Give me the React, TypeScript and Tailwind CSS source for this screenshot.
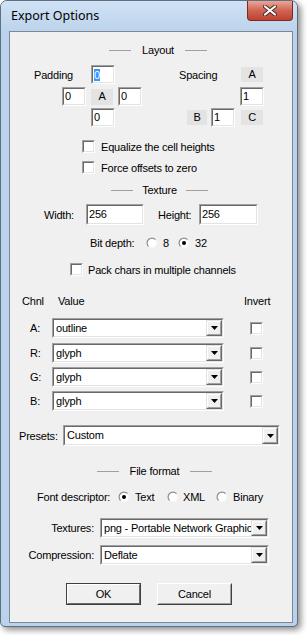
import React from 'react';

type Cls = { className?: string; children?: React.ReactNode };

function Sunken({ className = '', children, inner = '' }: Cls & { inner?: string }) {
  return (
    <div className={`shrink-0 border border-t-[#a0a0a0] border-l-[#a0a0a0] border-r-white border-b-white ${className}`}>
      <div className={`h-full border border-t-[#696969] border-l-[#696969] border-r-[#e3e3e3] border-b-[#e3e3e3] bg-white ${inner}`}>
        {children}
      </div>
    </div>
  );
}

function Edit({ className, value, selected }: { className: string; value: string; selected?: boolean }) {
  return (
    <Sunken className={className} inner="flex items-center pl-[1px]">
      {selected ? (
        <span className="bg-[#3399ff] text-white leading-[12px]">{value}</span>
      ) : (
        <span className="leading-[13px]">{value}</span>
      )}
    </Sunken>
  );
}

function Tag({ className = '', label }: { className?: string; label: string }) {
  return (
    <div className={`shrink-0 flex items-center justify-center bg-[#e3e3e3] leading-[13px] ${className}`}>
      {label}
    </div>
  );
}

function Check({ className = '' }: { className?: string }) {
  return <Sunken className={`w-[13px] h-[13px] ${className}`} />;
}

function Radio({ on = false }: { on?: boolean }) {
  return (
    <svg width="12" height="12" viewBox="0 0 12 12" className="shrink-0">
      <defs>
        <linearGradient id="rg" x1="0" y1="0" x2="1" y2="1">
          <stop offset="0.45" stopColor="#8c8c8c" />
          <stop offset="0.55" stopColor="#f4f4f4" />
        </linearGradient>
      </defs>
      <circle cx="6" cy="6" r="5.5" fill="url(#rg)" />
      <circle cx="6" cy="6" r="4.3" fill="#ffffff" />
      {on && <circle cx="6" cy="6" r="2" fill="#000000" />}
    </svg>
  );
}

function Arrow() {
  return (
    <div className="h-full w-[16px] shrink-0 border border-t-[#e3e3e3] border-l-[#e3e3e3] border-r-[#696969] border-b-[#696969]">
      <div className="h-full border border-t-white border-l-white border-r-[#a0a0a0] border-b-[#a0a0a0] bg-[#f0f0f0] flex items-center justify-center">
        <svg width="7" height="4" viewBox="0 0 7 4">
          <path d="M0 0h7L3.5 4z" fill="#000" />
        </svg>
      </div>
    </div>
  );
}

function Combo({ className, value }: { className: string; value: string }) {
  return (
    <Sunken className={className} inner="flex items-stretch">
      <div className="flex-1 flex items-center pl-[2px] overflow-hidden whitespace-nowrap leading-[13px]">{value}</div>
      <Arrow />
    </Sunken>
  );
}

function Header({ className, boxClass, label }: { className: string; boxClass: string; label: string }) {
  return (
    <div className={`flex items-center h-[14px] ${className}`}>
      <div className="w-[22px] h-px bg-[#a0a0a0] shrink-0" />
      <div className={`text-center leading-[14px] shrink-0 ${boxClass}`}>{label}</div>
      <div className="w-[22px] h-px bg-[#a0a0a0] shrink-0" />
    </div>
  );
}

function Button({ label, primary }: { label: string; primary?: boolean }) {
  return primary ? (
    <div className="w-[75px] h-[22px] border border-[#404040] shrink-0">
      <div className="h-full border border-t-white border-l-white border-r-[#696969] border-b-[#696969] bg-[#f0f0f0] flex items-center justify-center leading-[13px]">
        {label}
      </div>
    </div>
  ) : (
    <div className="w-[75px] h-[22px] border border-t-white border-l-white border-r-[#404040] border-b-[#404040] shrink-0">
      <div className="h-full border border-t-[#f0f0f0] border-l-[#f0f0f0] border-r-[#a0a0a0] border-b-[#a0a0a0] bg-[#f0f0f0] flex items-center justify-center leading-[13px]">
        {label}
      </div>
    </div>
  );
}

const channels = [
  { ch: 'A:', value: 'outline', mt: 'mt-[10px]' },
  { ch: 'R:', value: 'glyph', mt: 'mt-[5px]' },
  { ch: 'G:', value: 'glyph', mt: 'mt-[4px]' },
  { ch: 'B:', value: 'glyph', mt: 'mt-[4px]' },
];

export default function App() {
  return (
    <div className="w-[307px] h-[635px] bg-white overflow-hidden">
      <div className="w-[298px] h-[627px] flex flex-col rounded-t-[7px] rounded-b-[5px] border border-[#5f6f82] bg-[#bad2eb] shadow-[3px_3px_6px_rgba(0,0,0,0.45)]">
        {/* title bar */}
        <div className="h-[30px] flex items-start rounded-t-[6px] bg-linear-to-b from-[#d0e2f5] to-[#bcd3eb] shrink-0">
          <div className="ml-[10px] mt-[7px] text-[12.5px] leading-[16px] text-black font-['Noto_Sans',sans-serif]">
            Export Options
          </div>
          <div className="ml-auto mr-[4px] w-[46px] h-[20px] rounded-b-[4px] border border-t-0 border-[#7b2a20] bg-linear-to-b from-[#e9a698] via-[#cf6453] to-[#c0402f] flex items-center justify-center">
            <svg width="14" height="11" viewBox="0 0 14 11">
              <path d="M2 1.5L12 9.5M12 1.5L2 9.5" stroke="#4a2a26" strokeWidth="4" strokeLinecap="round" />
              <path d="M2 1.5L12 9.5M12 1.5L2 9.5" stroke="#ffffff" strokeWidth="2.2" strokeLinecap="round" />
            </svg>
          </div>
        </div>

        {/* client area */}
        <div className="ml-[8px] mr-[4px] mb-[3px] flex-1 border border-[#7c8896] bg-[#f0f0f0] flex flex-col text-[11px] tracking-[-0.2px] text-black font-['Liberation_Sans',Arial,sans-serif]">
          <Header className="mt-[11px] ml-[99px]" boxClass="w-[54px]" label="Layout" />

          <div className="mt-[8px] flex items-center h-[19px]">
            <span className="ml-[24px] w-[57px] leading-[14px]">Padding</span>
            <Edit className="w-[24px] h-[19px]" value="0" selected />
            <span className="ml-[64px] w-[62px] leading-[14px]">Spacing</span>
            <Tag className="w-[22px] h-[15px]" label="A" />
          </div>

          <div className="mt-[3px] flex items-center h-[19px]">
            <Edit className="ml-[52px] w-[24px] h-[19px]" value="0" />
            <Tag className="ml-[5px] w-[22px] h-[16px]" label="A" />
            <Edit className="ml-[5px] w-[24px] h-[19px]" value="0" />
            <Edit className="ml-[98px] w-[24px] h-[19px]" value="1" />
          </div>

          <div className="mt-[2px] flex items-center h-[19px]">
            <Edit className="ml-[81px] w-[24px] h-[19px]" value="0" />
            <Tag className="ml-[72px] w-[20px] h-[15px]" label="B" />
            <Edit className="ml-[4px] w-[24px] h-[19px]" value="1" />
            <Tag className="ml-[6px] w-[22px] h-[15px]" label="C" />
          </div>

          <div className="mt-[12px] flex items-center h-[15px]">
            <Check className="ml-[72px]" />
            <span className="ml-[6px] leading-[14px]">Equalize the cell heights</span>
          </div>
          <div className="mt-[6px] flex items-center h-[15px]">
            <Check className="ml-[72px]" />
            <span className="ml-[6px] leading-[14px]">Force offsets to zero</span>
          </div>

          <Header className="mt-[8px] ml-[101px]" boxClass="w-[53px]" label="Texture" />

          <div className="mt-[7px] flex items-center h-[21px]">
            <span className="ml-[34px] w-[42px] leading-[14px]">Width:</span>
            <Edit className="w-[58px] h-[21px]" value="256" />
            <span className="ml-[14px] w-[41px] leading-[14px]">Height:</span>
            <Edit className="w-[59px] h-[21px]" value="256" />
          </div>

          <div className="mt-[11px] flex items-center h-[14px]">
            <span className="ml-[80px] w-[56px] leading-[14px]">Bit depth:</span>
            <Radio />
            <span className="ml-[5px] w-[15px] leading-[14px]">8</span>
            <Radio on />
            <span className="ml-[5px] leading-[14px]">32</span>
          </div>

          <div className="mt-[12px] flex items-center h-[15px]">
            <Check className="ml-[60px]" />
            <span className="ml-[5px] leading-[14px]">Pack chars in multiple channels</span>
          </div>

          <div className="mt-[17px] flex items-center h-[14px] leading-[14px]">
            <span className="ml-[12px] w-[36px]">Chnl</span>
            <span className="w-[186px]">Value</span>
            <span>Invert</span>
          </div>

          {channels.map((c) => (
            <div key={c.ch} className={`${c.mt} flex items-center h-[20px]`}>
              <span className="ml-[20px] w-[22px] leading-[14px]">{c.ch}</span>
              <Combo className="w-[172px] h-[20px]" value={c.value} />
              <Check className="ml-[26px]" />
            </div>
          ))}

          <div className="mt-[14px] flex items-center h-[21px]">
            <span className="ml-[9px] w-[44px] leading-[14px]">Presets:</span>
            <Combo className="w-[217px] h-[21px]" value="Custom" />
          </div>

          <Header className="mt-[18px] ml-[87px]" boxClass="w-[71px]" label="File format" />

          <div className="mt-[12px] flex items-center h-[14px] leading-[14px]">
            <span className="ml-[27px] w-[81px]">Font descriptor:</span>
            <Radio on />
            <span className="ml-[5px] w-[32px]">Text</span>
            <Radio />
            <span className="ml-[4px] w-[33px]">XML</span>
            <Radio />
            <span className="ml-[5px]">Binary</span>
          </div>

          <div className="mt-[14px] flex items-center h-[20px]">
            <span className="w-[90px] pr-[6px] text-right leading-[14px]">Textures:</span>
            <Combo className="w-[169px] h-[20px]" value="png - Portable Network Graphics" />
          </div>
          <div className="mt-[7px] flex items-center h-[20px]">
            <span className="w-[90px] pr-[6px] text-right leading-[14px]">Compression:</span>
            <Combo className="w-[169px] h-[20px]" value="Deflate" />
          </div>

          <div className="mt-[18px] flex items-center h-[22px]">
            <div className="ml-[56px]">
              <Button label="OK" primary />
            </div>
            <div className="ml-[16px]">
              <Button label="Cancel" />
            </div>
          </div>
        </div>
      </div>
    </div>
  );
}
